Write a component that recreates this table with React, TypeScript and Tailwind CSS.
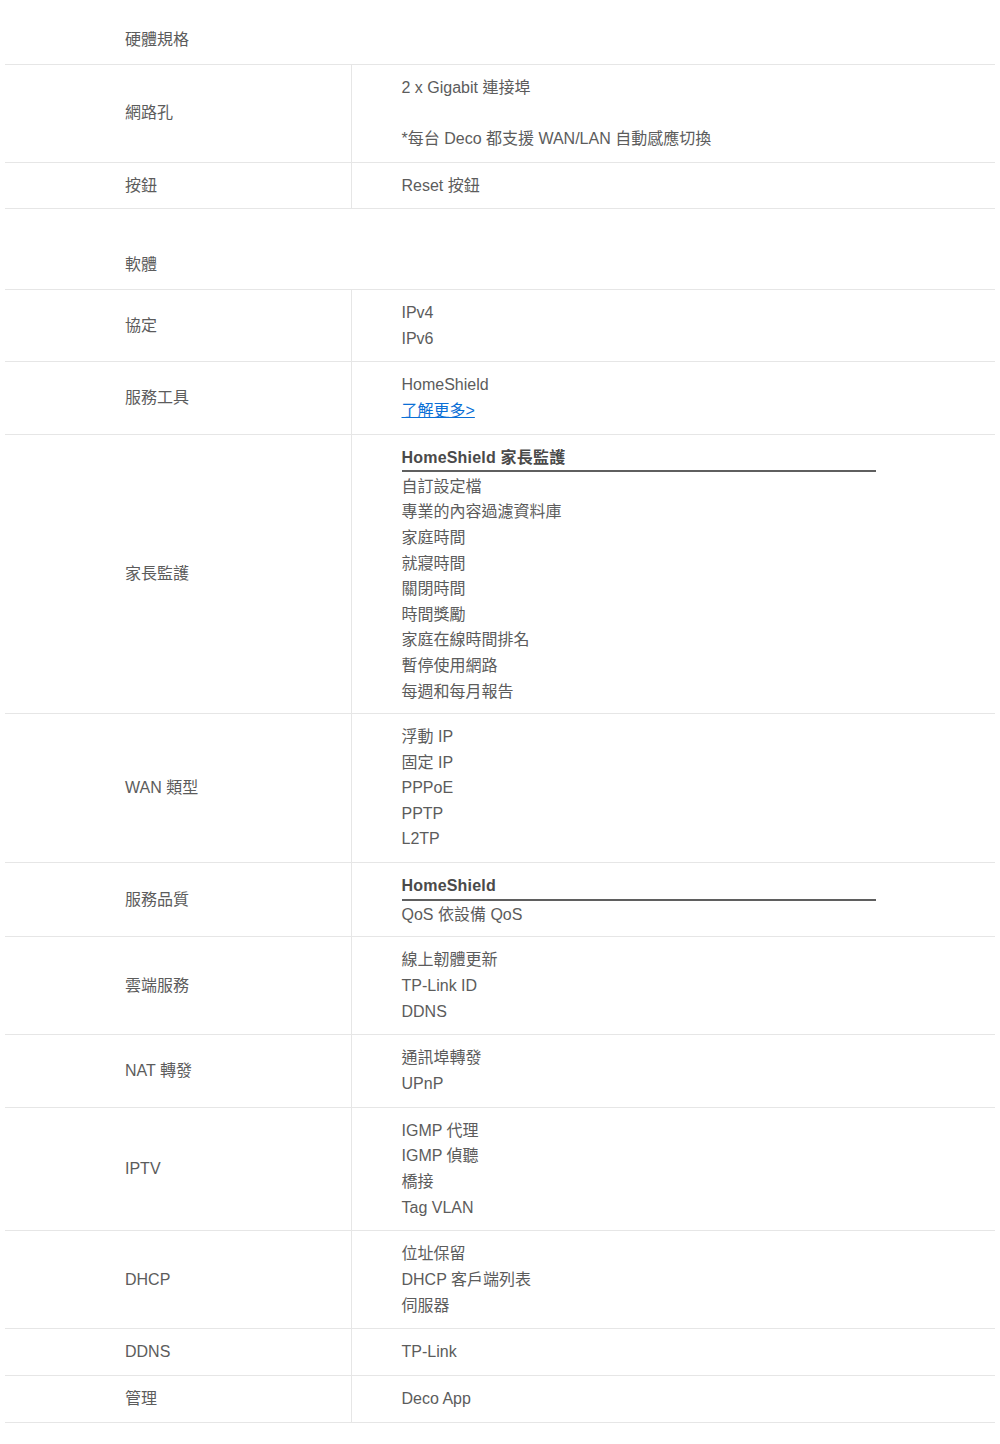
const font = { fontFamily: "'Liberation Sans', Arial, 'Noto Sans CJK TC', sans-serif" };

type Row = { label: string; items?: string[]; heading?: string; link?: string; gap?: boolean };

function Cell({ row }: { row: Row }) {
  return (
    <div className={`pt-[10.1px] pl-[50px] pr-5 ${row.heading ? 'pb-[8.6px]' : 'pb-[10.1px]'}`}>
      {row.heading && (
        <div className="mb-[1.5px] w-[474px] border-b-2 border-[#5f5f5f] font-bold text-[#4a4a4a] tracking-[0.2px]">{row.heading}</div>
      )}
      {row.items?.map((t, i) => (
        <div key={i} className={row.gap && i > 0 ? 'mt-[25.6px]' : ''}>
          {t}
        </div>
      ))}
      {row.link && (
        <div>
          <a href="#" className="text-[#0a6fd6] underline">{row.link}</a>
        </div>
      )}
    </div>
  );
}

function Table({ rows }: { rows: Row[] }) {
  return (
    <div>
      {rows.map((row) => (
        <div key={row.label} className="grid grid-cols-[35%_1fr] border-b border-[#e6e6e6]">
          <div className="flex items-center border-r border-[#e6e6e6] pl-[120px]">{row.label}</div>
          <Cell row={row} />
        </div>
      ))}
    </div>
  );
}

function Header({ title, first }: { title: string; first?: boolean }) {
  return (
    <div className={`pl-[120px] pt-[27px] pb-[11px] border-b border-[#e6e6e6] ${first ? '' : 'mt-4'}`}>{title}</div>
  );
}

export default function App() {
  const hardware: Row[] = [
    { label: '網路孔', items: ['2 x Gigabit 連接埠', '*每台 Deco 都支援 WAN/LAN 自動感應切換'], gap: true },
    { label: '按鈕', items: ['Reset 按鈕'] },
  ];
  const software: Row[] = [
    { label: '協定', items: ['IPv4', 'IPv6'] },
    { label: '服務工具', items: ['HomeShield'], link: '了解更多>' },
    {
      label: '家長監護',
      heading: 'HomeShield 家長監護',
      items: ['自訂設定檔', '專業的內容過濾資料庫', '家庭時間', '就寢時間', '關閉時間', '時間獎勵', '家庭在線時間排名', '暫停使用網路', '每週和每月報告'],
    },
    { label: 'WAN 類型', items: ['浮動 IP', '固定 IP', 'PPPoE', 'PPTP', 'L2TP'] },
    { label: '服務品質', heading: 'HomeShield', items: ['QoS 依設備 QoS'] },
    { label: '雲端服務', items: ['線上韌體更新', 'TP-Link ID', 'DDNS'] },
    { label: 'NAT 轉發', items: ['通訊埠轉發', 'UPnP'] },
    { label: 'IPTV', items: ['IGMP 代理', 'IGMP 偵聽', '橋接', 'Tag VLAN'] },
    { label: 'DHCP', items: ['位址保留', 'DHCP 客戶端列表', '伺服器'] },
    { label: 'DDNS', items: ['TP-Link'] },
    { label: '管理', items: ['Deco App'] },
  ];
  return (
    <div className="min-h-[1444px] bg-white px-[5px] text-[16px] leading-[25.6px] text-[#5c5c5c]" style={font}>
      <Header title="硬體規格" first />
      <Table rows={hardware} />
      <Header title="軟體" />
      <Table rows={software} />
    </div>
  );
}
